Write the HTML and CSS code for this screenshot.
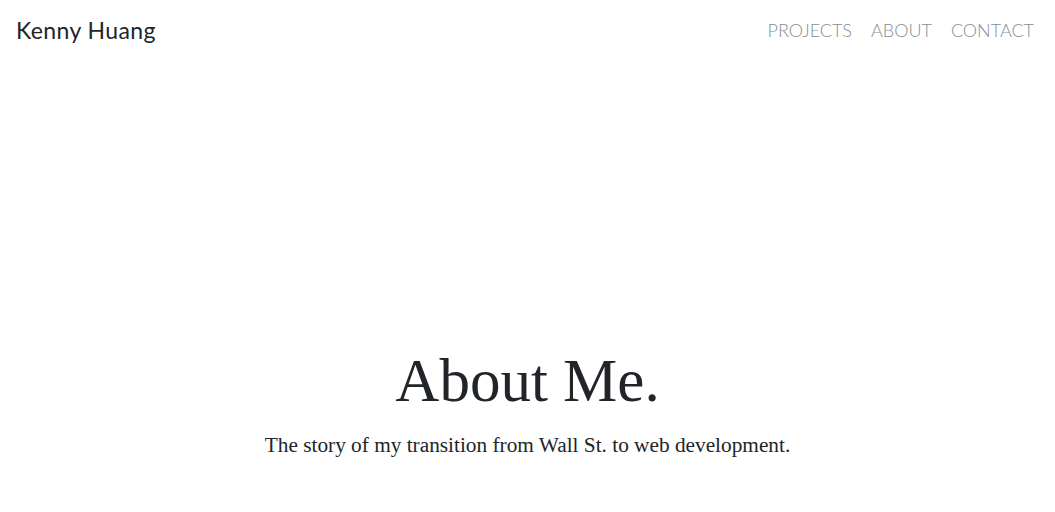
FILE: index.html
```html
<!DOCTYPE html>
<html lang="en">
<head>
<meta charset="utf-8">
<title>About Me</title>
<link rel="stylesheet" href="styles.css">
</head>
<body>
<header class="navbar">
  <a class="brand" href="#">Kenny Huang</a>
  <nav class="nav">
    <a class="nav-link" href="#">PROJECTS</a>
    <a class="nav-link" href="#">ABOUT</a>
    <a class="nav-link" href="#">CONTACT</a>
  </nav>
</header>
<section class="masthead">
  <h1 class="title">About Me.</h1>
  <p class="subtitle">The story of my transition from Wall St. to web development.</p>
</section>
</body>
</html>
```
FILE: styles.css
```css
html, body {
  margin: 0;
  padding: 0;
  background: #fff;
}
body {
  font-family: "Lato", "Noto Sans", sans-serif;
  color: #212529;
}
a { text-decoration: none; }
.navbar {
  height: 60px;
  display: flex;
  align-items: center;
  justify-content: space-between;
  padding: 0 21px 0 16px;
}
.brand {
  font-family: "Lato", sans-serif;
  font-weight: 400;
  font-size: 23px;
  color: #212529;
  letter-spacing: 0.4px;
}
.nav {
  display: flex;
  gap: 19px;
}
.nav-link {
  font-family: "Lato", sans-serif;
  font-weight: 300;
  font-size: 18px;
  color: #868e96;
  letter-spacing: 0;
}
.masthead {
  height: 452px;
  display: flex;
  flex-direction: column;
  justify-content: flex-end;
  align-items: center;
  padding-bottom: 53px;
  box-sizing: border-box;
  font-family: "Liberation Serif", "DejaVu Serif", serif;
}
.title {
  margin: 0;
  font-weight: 400;
  font-size: 61px;
  line-height: 1.2;
  color: #212529;
}
.subtitle {
  margin: 16px 0 0;
  font-size: 21.3px;
  line-height: 1.2;
  color: #212529;
}
```
